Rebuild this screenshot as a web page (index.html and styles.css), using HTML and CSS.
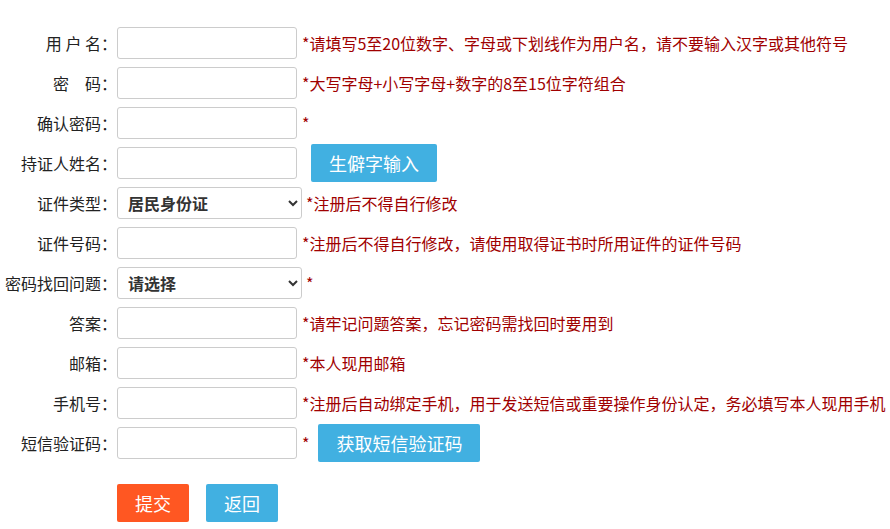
FILE: index.html
```html
<!DOCTYPE html>
<html>

<head>
    <meta charset="utf-8">
    <title>用户注册</title>
    <link rel="stylesheet" href="styles.css">
</head>

<body>
    <form class="reg-form">
        <div class="form-row">
            <label for="username">用 户 名：</label>
            <input type="text" id="username">
            <span class="tip">*请填写5至20位数字、字母或下划线作为用户名，请不要输入汉字或其他符号</span>
        </div>

        <div class="form-row">
            <label for="password">密　码：</label>
            <input type="password" id="password">
            <span class="tip">*大写字母+小写字母+数字的8至15位字符组合</span>
        </div>

        <div class="form-row">
            <label for="password2">确认密码：</label>
            <input type="password" id="password2">
            <span class="tip">*</span>
        </div>

        <div class="form-row">
            <label for="holderName">持证人姓名：</label>
            <input type="text" id="holderName">
            <button type="button" class="btn btn-blue btn-side">生僻字输入</button>
        </div>

        <div class="form-row">
            <label for="idType">证件类型：</label>
            <select id="idType">
                <option>居民身份证</option>
                <option>护照</option>
                <option>港澳通行证</option>
            </select>
            <span class="tip tip-select">*注册后不得自行修改</span>
        </div>

        <div class="form-row">
            <label for="idNumber">证件号码：</label>
            <input type="text" id="idNumber">
            <span class="tip">*注册后不得自行修改，请使用取得证书时所用证件的证件号码</span>
        </div>

        <div class="form-row">
            <label for="question">密码找回问题：</label>
            <select id="question">
                <option>请选择</option>
                <option>我的出生地？</option>
                <option>我母亲的名字？</option>
            </select>
            <span class="tip tip-select">*</span>
        </div>

        <div class="form-row">
            <label for="answer">答案：</label>
            <input type="text" id="answer">
            <span class="tip">*请牢记问题答案，忘记密码需找回时要用到</span>
        </div>

        <div class="form-row">
            <label for="email">邮箱：</label>
            <input type="text" id="email">
            <span class="tip">*本人现用邮箱</span>
        </div>

        <div class="form-row">
            <label for="mobile">手机号：</label>
            <input type="text" id="mobile">
            <span class="tip">*注册后自动绑定手机，用于发送短信或重要操作身份认定，务必填写本人现用手机</span>
        </div>

        <div class="form-row">
            <label for="smsCode">短信验证码：</label>
            <input type="text" id="smsCode">
            <span class="tip">*</span>
            <button type="button" class="btn btn-blue btn-sms">获取短信验证码</button>
        </div>

        <div class="form-actions">
            <button type="submit" class="btn btn-orange">提交</button>
            <button type="button" class="btn btn-blue">返回</button>
        </div>
    </form>
</body>

</html>
```

FILE: styles.css
```css
:root {
    --text-color: #222;
    --tip-color: #a00000;
    --border-color: #ccc;
    --blue: #41b0e1;
    --orange: #ff5722;
}

* {
    box-sizing: border-box;
    margin: 0;
    padding: 0;
}

body {
    font-family: "Noto Sans CJK SC", "Noto Sans", sans-serif;
    font-size: 16px;
    color: var(--text-color);
    background: #fff;
}

.reg-form {
    padding-top: 27px;
}

.form-row {
    display: flex;
    align-items: center;
    height: 32px;
    margin-bottom: 8px;
    white-space: nowrap;
}

.form-row label {
    width: 117px;
    flex-shrink: 0;
    text-align: right;
    line-height: 32px;
}

input[type="text"],
input[type="password"] {
    width: 180px;
    height: 32px;
    border: 1px solid var(--border-color);
    border-radius: 3px;
    padding: 0 8px;
    font-size: 16px;
    font-family: inherit;
    background: #fff;
}

input:focus,
select:focus {
    outline: none;
    border-color: var(--blue);
}

select {
    width: 185px;
    height: 32px;
    border: 1px solid var(--border-color);
    border-radius: 3px;
    padding: 0 6px;
    font-size: 16px;
    font-weight: bold;
    font-family: inherit;
    color: #333;
    background: #fff;
}

.tip {
    margin-left: 5px;
    color: var(--tip-color);
    font-size: 16px;
}

.tip-select {
    margin-left: 4px;
}

.btn {
    height: 38px;
    padding: 0 18px;
    border: none;
    border-radius: 2px;
    color: #fff;
    font-size: 18px;
    font-family: inherit;
    cursor: pointer;
    flex-shrink: 0;
}

.btn-blue {
    background: var(--blue);
}

.btn-orange {
    background: var(--orange);
}

.btn-side {
    margin-left: 14px;
}

.btn-sms {
    margin-left: 9px;
}

.form-actions {
    display: flex;
    gap: 17px;
    padding-left: 117px;
    margin-top: 25px;
}
```
